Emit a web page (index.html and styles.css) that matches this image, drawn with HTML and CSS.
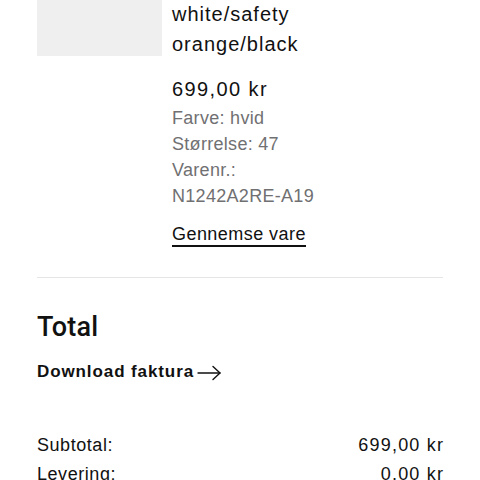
FILE: index.html
```html
<!DOCTYPE html>
<html lang="da">
<head>
<meta charset="utf-8">
<title>Ordre</title>
<link rel="stylesheet" href="styles.css">
</head>
<body>
<main class="page">
  <section class="item">
    <div class="thumb"></div>
    <div class="info">
      <div class="title">white/safety<br>orange/black</div>
      <div class="price">699,00 kr</div>
      <div class="meta">
        <div>Farve: hvid</div>
        <div>Størrelse: 47</div>
        <div>Varenr.:</div>
        <div>N1242A2RE-A19</div>
      </div>
      <a class="browse" href="#">Gennemse vare</a>
    </div>
  </section>
  <section class="total">
    <h2 class="total-title">Total</h2>
    <a class="download" href="#">Download faktura<svg class="arrow" width="24" height="16" viewBox="0 0 24 16" fill="none" stroke="#111" stroke-width="1.4" stroke-linecap="round" stroke-linejoin="round"><path d="M1 8H23"/><path d="M16 1.5L23 8L16 14.5"/></svg></a>
    <div class="rows">
      <div class="row"><span class="label">Subtotal:</span><span class="value">699,00 kr</span></div>
      <div class="row"><span class="label">Levering:</span><span class="value">0,00 kr</span></div>
    </div>
  </section>
</main>
</body>
</html>
```
FILE: styles.css
```css
html, body {
  margin: 0;
  padding: 0;
  background: #fff;
}
body {
  font-family: "Liberation Sans", Arial, sans-serif;
  color: #111;
}
.page {
  padding: 0 37px;
}
.item {
  display: flex;
  gap: 10px;
  padding-bottom: 30px;
  border-bottom: 1px solid #e5e5e5;
}
.thumb {
  width: 125px;
  height: 56px;
  flex: none;
  background: #efefef;
}
.info {
  display: flex;
  flex-direction: column;
  align-items: flex-start;
}
.title {
  font-size: 20px;
  line-height: 30px;
  letter-spacing: 1px;
  margin-top: -1px;
}
.price {
  font-size: 20px;
  line-height: 26px;
  letter-spacing: 1.4px;
  margin-top: 17px;
}
.meta {
  margin-top: 3px;
  font-size: 18px;
  line-height: 26px;
  letter-spacing: 0.3px;
  color: #707072;
}
.browse {
  display: inline-block;
  margin-top: 14px;
  font-size: 18px;
  line-height: 22px;
  letter-spacing: 0.45px;
  color: #111;
  text-decoration: none;
  border-bottom: 2px solid #111;
}
.total {
  padding-top: 33px;
}
.total-title {
  margin: 0;
  font-family: Roboto, "Liberation Sans", sans-serif;
  font-size: 27px;
  line-height: 32px;
  font-weight: 500;
  letter-spacing: 0.2px;
}
.download {
  display: inline-flex;
  align-items: center;
  margin-top: 17px;
  font-size: 17px;
  line-height: 24px;
  font-weight: 700;
  letter-spacing: 0.9px;
  color: #111;
  text-decoration: none;
}
.arrow {
  margin-left: 3px;
  margin-top: 2px;
}
.rows {
  margin-top: 47px;
}
.row {
  display: flex;
  justify-content: space-between;
  font-size: 18px;
  line-height: 29px;
}
.label {
  letter-spacing: 0.55px;
}
.value {
  letter-spacing: 1.2px;
  margin-right: -1.2px;
}
```
